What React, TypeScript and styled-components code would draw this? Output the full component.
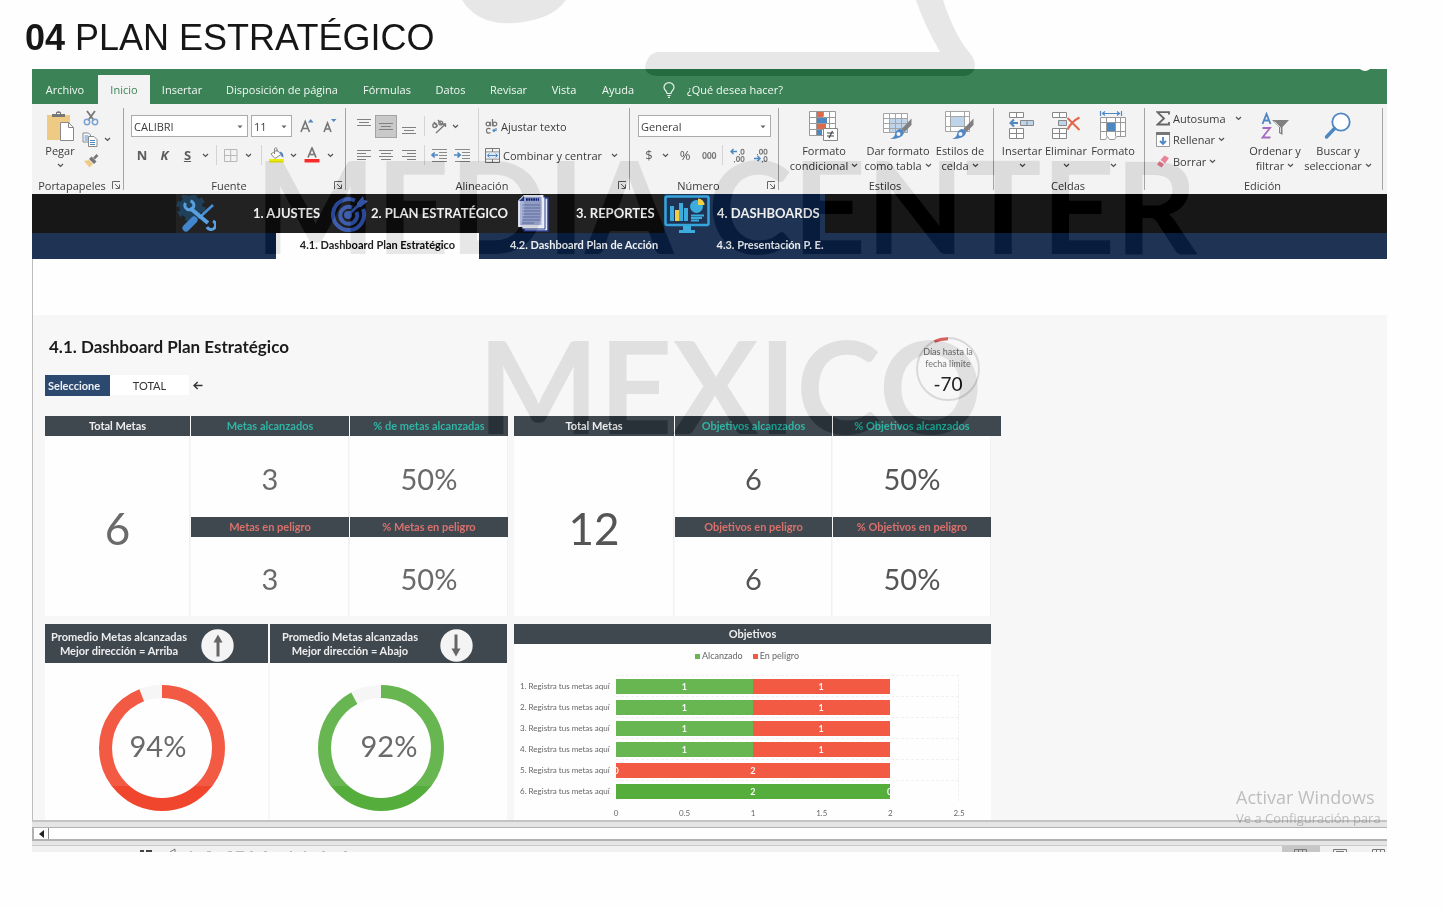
import React from "react";
import styled, { createGlobalStyle, css } from "styled-components";

const ui = `"Open Sans", "Noto Sans", sans-serif`;
const cell = `Lato, "Open Sans", sans-serif`;
const green = "#3c8257";
const slate = "#3f474f";
const GREY = "#767676";
const BLUE = "#4f87c3";

const Global = createGlobalStyle`
  * { box-sizing: border-box; }
  body { margin: 0; background: #fefefe; }
  button, select { font: inherit; color: inherit; border: 0; background: none; padding: 0; margin: 0; border-radius: 0; }
  svg { display: block; flex: none; }
`;

const Page = styled.div`
  position: relative;
  min-width: 1445px;
  min-height: 909px;
  background: #fefefe;
  overflow: hidden;
`;
const Title = styled.h1`
  margin: 0;
  padding: 16px 25px 9px;
  font: 400 36px/44px "Liberation Sans", Arial, sans-serif;
  color: #161616;
`;
const Window = styled.main`
  position: relative;
  margin: 0 58px 0 32px;
`;

/* ---------- ribbon tabs ---------- */
const TabBar = styled.nav`
  position: relative;
  display: flex;
  align-items: flex-end;
  height: 35px;
  background: ${green};
  font: 400 11px/28px ${ui};
  color: #f2f8f4;
  overflow: hidden;
  &::after {
    content: "";
    position: absolute;
    right: 16px;
    top: -8px;
    width: 12px;
    height: 10px;
    border-radius: 50%;
    background: #fefefe;
  }
`;
const Tab = styled.button<{ $w: number; $on?: boolean }>`
  width: ${(p) => p.$w}px;
  height: 29px;
  white-space: nowrap;
  ${(p) => p.$on && css`background: #f3f3f3; color: ${green};`}
`;
const Ask = styled(Tab)`
  display: flex;
  align-items: center;
  gap: 12px;
  padding-left: 15px;
`;

/* ---------- ribbon ---------- */
const Ribbon = styled.section`
  display: flex;
  height: 90px;
  padding: 4px 0 0;
  background: #f3f3f3;
  font: 400 11px/15px ${ui};
  color: #3c3c3c;
`;
const Group = styled.div<{ $w: number }>`
  display: flex;
  flex-direction: column;
  width: ${(p) => p.$w}px;
  height: 82px;
  border-right: 1px solid #a5a5a5;
`;
const GroupBody = styled.div<{ $pad?: number }>`
  display: flex;
  flex: 1;
  padding-left: ${(p) => p.$pad ?? 8}px;
`;
const GroupFoot = styled.div`
  display: flex;
  align-items: center;
  height: 10px;
  padding-right: 2px;
`;
const GroupName = styled.span`
  flex: 1;
  text-align: center;
`;
const Launcher = styled.button`
  width: 9px;
  height: 9px;
`;
const Stack = styled.div<{ $w?: number; $pad?: number }>`
  display: flex;
  flex-direction: column;
  width: ${(p) => (p.$w ? p.$w + "px" : "auto")};
  padding-left: ${(p) => p.$pad ?? 0}px;
`;
const Tools = styled.div<{ $h?: number }>`
  display: flex;
  align-items: center;
  height: ${(p) => p.$h ?? 29}px;
`;
const Tool = styled.button<{ $w: number; $on?: boolean }>`
  display: flex;
  align-items: center;
  justify-content: center;
  width: ${(p) => p.$w}px;
  height: 23px;
  font-size: 13px;
  color: #5c5c5c;
  ${(p) => p.$on && css`background: #c9c9c9; border: 1px solid #a3a3a3;`}
`;
const WideTool = styled.button<{ $far?: boolean }>`
  display: flex;
  align-items: center;
  gap: 3px;
  height: 22px;
  white-space: nowrap;
  ${(p) => p.$far && css`svg:last-child { margin-left: 6px; }`}
`;
const Divider = styled.span<{ $h?: number; $m?: number }>`
  width: 1px;
  height: ${(p) => p.$h ?? 20}px;
  margin: 0 ${(p) => p.$m ?? 4}px;
  background: #d4d4d4;
`;
const Combo = styled.label<{ $w: number }>`
  position: relative;
  display: flex;
  align-items: center;
  width: ${(p) => p.$w}px;
  height: 22px;
  margin-right: 3px;
  background: #fff;
  border: 1px solid #ababab;
  select {
    appearance: none;
    width: 100%;
    height: 20px;
    padding-left: 2px;
    outline: 0;
  }
  svg { position: absolute; right: 4px; top: 9px; }
`;
const Big = styled.button<{ $w: number }>`
  display: flex;
  flex-direction: column;
  align-items: center;
  width: ${(p) => p.$w}px;
  padding-top: 3px;
  white-space: nowrap;
  svg.art { margin-bottom: 2px; }
`;
const Line = styled.span`
  display: flex;
  align-items: center;
  justify-content: center;
  gap: 3px;
  height: 15px;
`;

/* ---------- workbook navigation ---------- */
const NavBar = styled.nav`
  display: flex;
  height: 39px;
  padding-left: 144px;
  background: #171717;
  font: 700 13px/39px ${cell};
  color: #f0f0f0;
`;
const NavItem = styled.a<{ $w: number; $gap: number; $on?: boolean }>`
  display: flex;
  align-items: center;
  gap: ${(p) => p.$gap}px;
  width: ${(p) => p.$w}px;
  color: inherit;
  text-decoration: none;
  white-space: nowrap;
  background: ${(p) => (p.$on ? "#1f3454" : "#222")};
`;
const SubBar = styled.nav`
  display: flex;
  height: 26px;
  padding-left: 244px;
  background: #1f3454;
  font: 700 11px/23px ${cell};
  color: #eef1f5;
`;
const SubItem = styled.a<{ $w: number; $on?: boolean }>`
  width: ${(p) => p.$w}px;
  text-align: center;
  color: inherit;
  text-decoration: none;
  ${(p) => p.$on && css`background: #fefefe; color: #222;`}
`;

/* ---------- sheet ---------- */
const Sheet = styled.section`
  position: relative;
  height: 561px;
  padding-top: 56px;
  border-left: 1px solid #bdbdbd;
  background: #fefefe;
  overflow: hidden;
  font-family: ${cell};
`;
const Canvas = styled.div`
  height: 505px;
  padding: 22px 0 0 12px;
  background: #f7f7f7;
`;
const Head = styled.header`
  display: flex;
  justify-content: space-between;
  width: 935px;
  height: 79px;
`;
const Heading = styled.h2`
  margin: 0 0 18px 4px;
  font: 700 17px/20px ${cell};
  color: #1b1b1b;
`;
const Picker = styled.label`
  display: flex;
  align-items: center;
  height: 20px;
  font-size: 11px;
  line-height: 21px;
  color: #333;
  select {
    appearance: none;
    width: 79px;
    height: 20px;
    margin-right: 4px;
    background: #fff;
    text-align: center;
    text-align-last: center;
    outline: 0;
  }
`;
const PickerName = styled.span`
  width: 65px;
  padding-left: 3px;
  background: #2c4a70;
  color: #eef1f5;
  font-weight: 700;
`;
const Deadline = styled.div`
  position: relative;
  width: 64px;
  height: 64px;
  padding-top: 9px;
  text-align: center;
  white-space: nowrap;
  font-size: 9px;
  line-height: 12px;
  color: #777;
  > svg { position: absolute; left: 0; top: 0; }
  p { position: relative; margin: 0 -4px; }
  strong { position: relative; display: block; font: 400 19px/28px ${cell}; color: #222; }
`;
const Board = styled.div`
  display: grid;
  grid-template-columns: 463px 477px;
  gap: 8px 6px;
`;
const Kpis = styled.div<{ $cols: string }>`
  display: grid;
  grid-template-columns: ${(p) => p.$cols};
  grid-template-rows: 20px 81px 20px 79px;
  column-gap: 1px;
`;
const Bar = styled.div<{ $tone?: string; $over?: boolean }>`
  background: ${slate};
  color: ${(p) => p.$tone ?? "#eee"};
  font: 700 11px/20px ${cell};
  text-align: center;
  ${(p) => p.$over && css`margin-right: -10px; padding-right: 10px;`}
`;
const Value = styled.div<{ $big?: boolean; $dark?: boolean }>`
  display: flex;
  align-items: center;
  justify-content: center;
  padding: 3px 0 0 1px;
  background: #fefefe;
  border-right: 1px solid #f1f1f1;
  font-size: ${(p) => (p.$big ? 44 : 29)}px;
  color: ${(p) => (p.$dark ? "#555" : "#6a6a6a")};
  ${(p) => p.$big && css`grid-row: 2 / 5;`}
`;
const Gauges = styled.div`
  display: grid;
  grid-template-columns: 223px 237px;
  column-gap: 2px;
`;
const Panel = styled.article`
  height: 196px;
  background: #fefefe;
`;
const GaugeHead = styled.header<{ $pad: number; $gap: number }>`
  display: flex;
  align-items: center;
  gap: ${(p) => p.$gap}px;
  height: 39px;
  padding-left: ${(p) => p.$pad}px;
  background: ${slate};
  color: #eee;
  font: 700 11px/14px ${cell};
  text-align: center;
  white-space: nowrap;
  svg { margin-top: 4px; }
`;
const GaugeBody = styled.div<{ $left: number }>`
  padding: 21px 0 0 ${(p) => p.$left}px;
`;
const Chart = styled.div`
  padding: 5px 0 0 6px;
  color: #666;
  font-size: 8px;
`;
const Legend = styled.div`
  display: flex;
  justify-content: center;
  gap: 10px;
  height: 14px;
  margin: 0 17px 12px 0;
  font-size: 9px;
  line-height: 14px;
`;
const Key = styled.span<{ $c: string }>`
  display: flex;
  align-items: center;
  gap: 2px;
  &::before { content: ""; width: 5px; height: 5px; background: ${(p) => p.$c}; }
`;
const Row = styled.div`
  display: flex;
  align-items: center;
  height: 21px;
`;
const RowName = styled.span`
  width: 96px;
  padding-right: 8px;
  text-align: right;
  white-space: nowrap;
`;
const Plot = styled.div`
  display: flex;
  align-items: center;
  width: 343px;
  height: 21px;
  border: 1px dashed #f1f1f1;
  border-width: 1px 1px 0 0;
`;
const Seg = styled.span<{ $c: string }>`
  display: flex;
  justify-content: center;
  height: 15px;
  background: ${(p) => p.$c};
  color: #f7f7f7;
  font: 700 9px/15px ${cell};
`;
const Zero = styled(Seg)`
  position: relative;
  z-index: 1;
  width: 0;
`;
const Axis = styled.div`
  display: flex;
  justify-content: space-between;
  width: 363px;
  margin-left: 86px;
  padding-top: 6px;
  line-height: 12px;
  span { width: 20px; text-align: center; }
`;
const Activate = styled.div`
  position: absolute;
  right: 0;
  bottom: 25px;
  width: 151px;
  z-index: 2;
  color: rgba(120, 120, 120, 0.45);
  font: 400 13px/18px ${ui};
  white-space: nowrap;
  strong { display: block; font: 400 18px/24px ${ui}; }
`;

/* ---------- window bottom ---------- */
const Bottom = styled.footer`
  position: relative;
  border-top: 2px solid #c4c4c4;
  background: #e5e5e5;
  padding-top: 5px;
`;
const ScrollTrack = styled.div`
  display: flex;
  height: 14px;
  border: solid #b2b2b2;
  border-width: 1px 0 2px;
  background: #fefefe;
`;
const ScrollButton = styled.button`
  display: flex;
  align-items: center;
  justify-content: center;
  width: 17px;
  border-left: 2px solid #b2b2b2;
  border-right: 1px solid #8a8a8a;
`;
const StatusBar = styled.div`
  display: flex;
  justify-content: space-between;
  height: 7px;
  margin-top: 4px;
  border-top: 1px solid #cacaca;
  background: #f1f1f1;
  overflow: hidden;
`;

/* ---------- watermark ---------- */
const Mark = styled.div<{ $x: number; $y: number; $gap?: number }>`
  position: absolute;
  left: ${(p) => p.$x}px;
  top: ${(p) => p.$y}px;
  z-index: 3;
  display: flex;
  gap: ${(p) => p.$gap ?? 0}px;
  color: #171717;
  font: 700 128px/96px ${cell};
  mix-blend-mode: difference;
  pointer-events: none;
  white-space: nowrap;
`;

/* ---------- icons ---------- */
const Chev = () => (
  <svg width="7" height="5" viewBox="0 0 7 5"><path d="M1 1l2.5 2.4L6 1" fill="none" stroke="#555" strokeWidth="1.3" /></svg>
);
const Tri = () => (
  <svg width="6" height="4" viewBox="0 0 6 4"><path d="M.5.5h5L3 3.3z" fill="#666" /></svg>
);
const Corner = () => (
  <svg width="9" height="9" viewBox="0 0 9 9"><path d="M.5 8V.5H8M3 3l4 4M7.5 3.5v4h-4" fill="none" stroke="#666" /></svg>
);
const Lines = ({ rows, y = 3 }: { rows: [number, number][]; y?: number }) => (
  <svg width="16" height="17" viewBox="0 0 16 17">
    {rows.map(([a, b], i) => <path key={i} d={`M${a} ${y + i * 3 + 0.5}H${b}`} stroke="#808080" />)}
  </svg>
);
const Indent = ({ right }: { right?: boolean }) => (
  <svg width="17" height="15" viewBox="0 0 17 15">
    <path d="M1 1.5h15M8 4.5h8M8 7.5h8M8 10.5h8M1 13.5h15" stroke="#8a8a8a" />
    <path d={right ? "M0 7h6M3.5 4.5L6.2 7 3.5 9.5" : "M7 7H1M3.7 4.5L1 7l2.7 2.5"} fill="none" stroke={BLUE} strokeWidth="1.7" />
  </svg>
);
const Grow = ({ down }: { down?: boolean }) => (
  <svg width="15" height="16" viewBox="0 0 15 16">
    <path d={down ? "M1 14L4.5 5 8 14M2.3 11h4.5" : "M1 14L5.2 3.5 9.500 14M2.500 10.500h5.500"} fill="none" stroke={GREY} strokeWidth="1.6" />
    <path d={down ? "M8 1h5.500L10.700 4z" : "M8 4.500h5.500L10.700 1z"} fill={BLUE} />
  </svg>
);
const Clipboard = () => (
  <svg className="art" width="28" height="30" viewBox="0 0 28 30">
    <path d="M1 4h23v25H1z" fill="#efca85" />
    <path d="M6 6V3h4V1.200q2.500-2 5 0V3h4v3z" fill="#777" />
    <path d="M11 2.500h3" stroke="#f3f3f3" />
    <path d="M14.500 11.500h8l5 5v13h-13z" fill="#fff" stroke="#888" /><path d="M22.500 11.500v5h5" fill="none" stroke="#888" />
  </svg>
);
const Scissors = () => (
  <svg width="16" height="16" viewBox="0 0 16 16">
    <path d="M4 1l7 9.500M12 1L5 10.500" stroke="#777" strokeWidth="1.800" />
    <circle cx="4" cy="12" r="2.700" fill="none" stroke="#7ba3d2" strokeWidth="1.500" /><circle cx="12" cy="12" r="2.700" fill="none" stroke="#7ba3d2" strokeWidth="1.500" />
  </svg>
);
const Copy = () => (
  <svg width="16" height="15" viewBox="0 0 16 15">
    <path d="M1 1h5.500l2 2v7H1z" fill="#fff" stroke="#888" /><path d="M2.500 4h4M2.500 6h4M2.500 8h4" stroke={BLUE} />
    <path d="M6.500 4.500h5.500l3 3v7H6.500z" fill="#fff" stroke="#888" /><path d="M8 8.500h5M8 10.500h5M8 12.500h5" stroke={BLUE} />
  </svg>
);
const Brush = () => (
  <svg width="16" height="14" viewBox="0 0 16 14">
    <path d="M1 7l5-1 4 4-3.500 3.500z" fill="#efca85" /><path d="M6 5l2.500-2.500 5 5L11 10z" fill="#777" /><path d="M11 4.500L14.500 1" stroke="#777" strokeWidth="2.500" />
  </svg>
);
const Borders = () => (
  <svg width="14" height="13" viewBox="0 0 14 13"><path d="M.5.500h12.500v12H.500zM6.700.500v12M.500 6.500H13" fill="none" stroke="#b8b8b8" /></svg>
);
const Bucket = () => (
  <svg width="17" height="16" viewBox="0 0 17 16">
    <path d="M3 7l6-4 4 4.500-6 4z" fill="#fff" stroke="#888" /><path d="M6.500 7V1.500q1.500-1.500 2.500 0V5" fill="none" stroke="#888" />
    <path d="M11.500 4.500q4 0 4 6l-2-1z" fill={BLUE} /><path d="M1 12h15v3.500H1z" fill="#eceb0c" />
  </svg>
);
const FontColor = () => (
  <svg width="16" height="16" viewBox="0 0 16 16">
    <path d="M4 10.500L8 1l4 9.500M5.300 7.500h5.400" fill="none" stroke={GREY} strokeWidth="1.700" /><path d="M.500 12h15v3.500H.500z" fill="#fb2a2a" />
  </svg>
);
const Orient = () => (
  <svg width="16" height="15" viewBox="0 0 16 15">
    <g fill="none" stroke={GREY} strokeWidth="1.300"><circle cx="3.800" cy="6.500" r="2" /><path d="M3 3l3.500 4.500M7 1l4 5" /><circle cx="9.700" cy="4" r="1.900" /><path d="M5 14L14.500 5M11.500 5h3v3" /></g>
  </svg>
);
const Wrap = () => (
  <svg width="13" height="15" viewBox="0 0 13 15">
    <g fill="none" stroke={GREY} strokeWidth="1.300"><circle cx="3" cy="5" r="1.900" /><path d="M5.300 2.800v4.500M7.500 0v7.200" /><circle cx="9.800" cy="5" r="1.900" /><path d="M5.500 9.800q-4-1.500-4 1.900t4 1.900" /></g>
    <path d="M11 9v2.500H8M9.500 10L8 11.500 9.500 13" fill="none" stroke={BLUE} strokeWidth="1.200" />
  </svg>
);
const Merge = () => (
  <svg width="15" height="15" viewBox="0 0 15 15">
    <path d="M.500.500h14v14H.500zM.500 4h14M.500 11h14M7.500.500V4M7.500 11v3.500" fill="none" stroke="#777" /><path d="M1 4.500h13v6H1z" fill="#dce8f5" />
    <path d="M2.500 7.500h10M4.500 5.500l-2 2 2 2M10.500 5.500l2 2-2 2" fill="none" stroke={BLUE} />
  </svg>
);
const Decimals = ({ less }: { less?: boolean }) => (
  <svg width="16" height="15" viewBox="0 0 16 15">
    <g fill="none" stroke={GREY} strokeWidth="1.100">
      {less ? <><ellipse cx="8" cy="3.700" rx="1.500" ry="2.500" /><ellipse cx="12.500" cy="3.700" rx="1.500" ry="2.500" /><ellipse cx="12.500" cy="11" rx="1.500" ry="2.500" /><path d="M4.500 6v1.200M9.500 13v1.500" /></>
        : <><ellipse cx="12.500" cy="3.700" rx="1.500" ry="2.500" /><ellipse cx="8" cy="11" rx="1.500" ry="2.500" /><ellipse cx="12.500" cy="11" rx="1.500" ry="2.500" /><path d="M9.500 6v1.200M4.500 13v1.500" /></>}
    </g>
    <path d={less ? "M1 10.500h6M4.500 8l2.500 2.500L4.500 13" : "M7 3.500H1M3.500 1L1 3.500 3.500 6"} fill="none" stroke={BLUE} strokeWidth="1.500" />
  </svg>
);
const Thousands = () => (
  <svg width="15" height="9" viewBox="0 0 15 9">
    <g fill="none" stroke={GREY} strokeWidth="1.200"><ellipse cx="2.500" cy="4.500" rx="1.600" ry="3" /><ellipse cx="7.300" cy="4.500" rx="1.600" ry="3" /><ellipse cx="12" cy="4.500" rx="1.600" ry="3" /></g>
  </svg>
);
const Conditional = () => (
  <svg className="art" width="30" height="30" viewBox="0 0 30 30">
    <path d="M1 1h26v23H1z" fill="#fff" /><path d="M8 1h6v5H8zM8 12h9v6H8z" fill="#dd6a4b" /><path d="M8 7h10v5H8zM8 18h5v6H8z" fill={BLUE} />
    <path d="M.5.500h26v24H.500zM7.500.500v24M14.500.500v5M20.500.500v24M.500 6.500h26M.500 12.500h26M.500 18.500h14" fill="none" stroke="#999" />
    <path d="M14.500 17.500h14v12h-14z" fill="#fff" stroke="#888" /><path d="M18 22h7M18 25h7M23.500 20l-3.500 7" stroke="#444" strokeWidth="1.200" />
  </svg>
);
const PaintBrush = () => (
  <><path d="M28.500 7.500v6.500L21.500 21l-3-3z" fill="#808080" /><path d="M16.500 18q4 0 4.500 4-2 6-14 6 5-2 5-5 1-4 4.500-5z" fill={BLUE} /><circle cx="15.500" cy="23" r="2" fill="#f3f3f3" /></>
);
const TableStyle = () => (
  <svg className="art" width="30" height="30" viewBox="0 0 30 30">
    <path d="M1 3h23v19H1z" fill="#fff" /><path d="M7 8h17v14H7z" fill="#bdd4eb" />
    <path d="M.500 2.500h24v19H.500zM6.500 2.500v19M12.500 2.500v19M18.500 2.500v19M.500 7.500h24M.500 12.500h24M.500 17.500h24" fill="none" stroke="#a5a5a5" /><PaintBrush />
  </svg>
);
const CellStyle = () => (
  <svg className="art" width="30" height="30" viewBox="0 0 30 30">
    <path d="M1 1h24v20H1z" fill="#fff" /><path d="M6 6h13v10H6z" fill="#bdd4eb" />
    <path d="M.500.500h24v20H.500zM5.500.500v20M19.500.500v20M.500 5.500h24M.500 15.500h24" fill="none" stroke="#a5a5a5" /><PaintBrush />
  </svg>
);
const InsertCells = () => (
  <svg className="art" width="26" height="30" viewBox="0 0 26 30">
    <path d="M.500 1.500h14v5H.500zM7.500 1.500v5M.500 17.500h14v10H.500zM7.500 17.500v10M.500 22.500h14" fill="#fff" stroke="#888" />
    <path d="M11.500 9.500h13v5h-13zM18 9.500v5" fill="#bdd4eb" stroke="#888" /><path d="M9 12H2M5 8.500L1.500 12 5 15.500" fill="none" stroke={BLUE} strokeWidth="2" />
  </svg>
);
const DeleteCells = () => (
  <svg className="art" width="29" height="30" viewBox="0 0 29 30">
    <path d="M.500 1.500h14v5H.500zM7.500 1.500v5M.500 17.500h14v10H.500zM7.500 17.500v10M.500 22.500h14" fill="#fff" stroke="#888" />
    <path d="M6.500 9.500h8v5h-8z" fill="#bdd4eb" stroke="#888" /><path d="M15.500 7l12 12M27.500 6.500q-8 4-12 12" fill="none" stroke="#e2674a" strokeWidth="2" />
  </svg>
);
const FormatCells = () => (
  <svg className="art" width="28" height="30" viewBox="0 0 28 30">
    <path d="M1.500 0v5M22.500 0v5M3 2.500h18M6 .500l-2.500 2L6 4.500M18 .500l2.500 2-2.500 2" fill="none" stroke={BLUE} strokeWidth="1.200" />
    <path d="M1.500 6.500h25v19h-9l-2 3h-5l-2-3-2 3h-5z" fill="#fff" stroke="#999" /><path d="M7.500 6.500v19M16.500 6.500v19M21.500 6.500v19M1.500 11.500h25M1.500 20.500h25" stroke="#999" /><path d="M8 12h8v8H8z" fill={BLUE} />
  </svg>
);
const Sigma = () => (
  <svg width="14" height="15" viewBox="0 0 14 15"><path d="M13 3.500V1.200H1.500L8 7.500l-6.500 6H13v-2.500" fill="none" stroke="#666" strokeWidth="1.800" /></svg>
);
const Fill = () => (
  <svg width="14" height="15" viewBox="0 0 14 15"><path d="M.500.500h13v14H.500z" fill="#fff" stroke="#999" /><path d="M0 0h14v3H0z" fill="#777" /><path d="M7 5v7M4 9l3 3 3-3" fill="none" stroke={BLUE} strokeWidth="1.800" /></svg>
);
const Eraser = () => (
  <svg width="14" height="13" viewBox="0 0 14 13"><path d="M8.500.500L13 3 9 8.500 4.500 5z" fill="#e88496" /><path d="M3.500 6l4.500 3.500L5.500 12.500 1 9.500z" fill="#e88496" /></svg>
);
const SortIcon = () => (
  <svg className="art" width="28" height="30" viewBox="0 0 28 30">
    <path d="M1.500 13L5.500 3l4 10M3 9.500h5" fill="none" stroke={BLUE} strokeWidth="1.800" /><path d="M1.500 17H9L1.500 26.500h8" fill="none" stroke="#a66ac2" strokeWidth="1.800" />
    <path d="M11 9h17l-6.500 7v8l-3.500-2v-6z" fill="#808080" /><path d="M13.500 10.500l6 6v5" fill="none" stroke="#ddd" />
  </svg>
);
const FindIcon = () => (
  <svg className="art" width="28" height="30" viewBox="0 0 28 30"><circle cx="17" cy="11" r="8.700" fill="#fff" stroke={BLUE} strokeWidth="1.800" /><path d="M10.500 17.500L2.500 26" stroke={BLUE} strokeWidth="3.500" strokeLinecap="round" /></svg>
);
const Bulb = () => (
  <svg width="12" height="16" viewBox="0 0 12 16"><path d="M4 11.500q0-1.500-1.500-3Q1 7 1 5.300a5 4.600 0 0 1 10 0Q11 7 9.500 8.500 8 10 8 11.500zM4.300 13.500h3.400M5 15.300h2" fill="none" stroke="#e5f0e8" strokeWidth="1.200" /></svg>
);
const ToolsArt = () => (
  <svg width="40" height="38" viewBox="0 0 40 38">
    <circle cx="15" cy="12" r="12.500" fill="none" stroke="#1f4058" strokeWidth="4" strokeDasharray="5.600 4.200" /><circle cx="15" cy="12" r="11.500" fill="#1f4058" />
    <path d="M37 10L23 23" stroke="#4a90d9" strokeWidth="2.500" /><path d="M10 33l8-8" stroke="#4285cd" strokeWidth="7" strokeLinecap="round" />
    <path d="M14 13l18 15" stroke="#5aa0e0" strokeWidth="4" />
    <path d="M10.500 8a4.500 4.500 0 1 0 5-2M38 26a4.500 4.500 0 1 1-6 6" fill="none" stroke="#5aa0e0" strokeWidth="3" transform="translate(-1 0)" />
  </svg>
);
const TargetArt = () => (
  <svg width="38" height="38" viewBox="0 0 38 38">
    <g fill="none" stroke="#3f5fae" strokeWidth="4"><path d="M24 5.500A15.500 15.500 0 1 0 32 14" /><path d="M21 12.500A8.500 8.500 0 1 0 25.500 17" /></g>
    <circle cx="17" cy="20" r="4" fill="#3f5fae" /><path d="M17 20L30 8" stroke="#3f5fae" strokeWidth="3" /><path d="M26 8l6-7 1 4 4 1-7 6-4 .5z" fill="#4868ba" />
  </svg>
);
const ReportArt = () => (
  <svg width="33" height="38" viewBox="0 0 33 38">
    <path d="M7 3h24v33H7z" fill="#e4e8f4" stroke="#2b3f8f" strokeWidth="1.500" /><path d="M5 2h23v32H5z" fill="#f0f2f8" stroke="#2b3f8f" />
    <path d="M7 1h18.500v30H2V6z" fill="#aab4d8" stroke="#e9ecf6" strokeWidth="1.800" /><path d="M2 6l5-5v5z" fill="#223a8c" /><path d="M9 4.500h13" stroke="#223a8c" strokeWidth="2.500" strokeDasharray="1.800 .6" />
    <path d="M5 10h18M5 13h18M5 16h18M5 19h18M5 22h18M5 25h18M5 28h12" stroke="#7382ba" />
  </svg>
);
const MonitorArt = () => (
  <svg width="46" height="38" viewBox="0 0 46 38">
    <rect x="1.500" y="1.500" width="43" height="28.500" rx="1.500" fill="#1f3454" stroke="#35a5dc" strokeWidth="2.500" />
    <path d="M6 11h4v15H6zM15 8h4v18h-4zM20 13h4v13h-4z" fill="#3cacdf" /><path d="M11 15h4v11h-4z" fill="#f0cf45" />
    <circle cx="32.500" cy="11.500" r="6.500" fill="#3cacdf" /><path d="M34 10V3.500a6.500 6.500 0 0 1 6.500 6.500z" fill="#f0cf45" />
    <path d="M27 20.500h13M27 23h11M27 25.500h8" stroke="#3cacdf" strokeWidth="1.800" /><path d="M19 31h8v4h4v3H15v-3h4z" fill="#3cacdf" />
  </svg>
);
const Arrow = ({ down }: { down?: boolean }) => (
  <svg width="33" height="33" viewBox="0 0 33 33">
    <circle cx="16.500" cy="16.500" r="16.200" fill="#f4f4f4" />
    <path d="M15.500 27.500V13.500h-3L17 5.500l4.500 8h-3v14z" fill="#666" transform={down ? "rotate(180 16.500 16.500)" : undefined} />
  </svg>
);
const Donut = ({ pct, top, bottom, id, shift }: { pct: number; top: string; bottom: string; id: string; shift: number }) => {
  const c = 2 * Math.PI * 56.5;
  return (
    <svg width="128" height="128" viewBox="0 0 128 128" role="img" aria-label={`${pct}%`}>
      <defs>
        <linearGradient id={id} gradientUnits="userSpaceOnUse" x1="0" y1="0" x2="0" y2="128">
          <stop offset=".797" stopColor={top} /><stop offset=".797" stopColor={bottom} />
        </linearGradient>
        <mask id={id + "m"}>
          <circle cx="64" cy="64" r="56.5" fill="none" stroke="#fff" strokeWidth="13" strokeDasharray={`${(c * pct) / 100} ${c}`} transform="rotate(-90 64 64)" />
        </mask>
      </defs>
      <circle cx="64" cy="64" r="56.5" fill="none" stroke="#f6f6f6" strokeWidth="13" />
      <rect width="128" height="128" fill={`url(#${id})`} mask={`url(#${id}m)`} />
      <text x={64 + shift} y="73" textAnchor="middle" fontFamily="Lato, sans-serif" fontSize="29" fill="#6a6a6a">{pct}%</text>
    </svg>
  );
};

const teal = "#2fb5a4";
const coral = "#d9716c";
const G = "#68b651";
const R = "#f35a44";
const rows: [number, number][] = [[1, 1], [1, 1], [1, 1], [1, 1], [0, 2], [2, 0]];

const KpiBlock = ({ cols, total, heads, values, dark, over }: { cols: string; total: string; heads: string[]; values: string[]; dark?: boolean; over?: boolean }) => (
  <Kpis $cols={cols}>
    <Bar>Total Metas</Bar><Bar $tone={teal}>{heads[0]}</Bar><Bar $tone={teal} $over={over}>{heads[1]}</Bar>
    <Value $big $dark={dark}>{total}</Value><Value $dark={dark}>{values[0]}</Value><Value $dark={dark}>{values[1]}</Value>
    <Bar $tone={coral}>{heads[2]}</Bar><Bar $tone={coral}>{heads[3]}</Bar>
    <Value $dark={dark}>{values[2]}</Value><Value $dark={dark}>{values[3]}</Value>
  </Kpis>
);
const Part = ({ n, color }: { n: number; color: string }) =>
  n > 0 ? <Seg $c={color} style={{ width: `${n * 40}%` }}>{n}</Seg> : <Zero $c={color}>0</Zero>;
const BigTool = ({ w, icon, a, b }: { w: number; icon: React.ReactNode; a: string; b?: string }) => (
  <Big $w={w}>{icon}<Line>{a}</Line><Line>{b}<Chev /></Line></Big>
);
const Foot = ({ name, launch }: { name: string; launch?: boolean }) => (
  <GroupFoot><GroupName>{name}</GroupName>{launch && <Launcher aria-label={name}><Corner /></Launcher>}</GroupFoot>
);

export default function App() {
  return (
    <Page>
      <Global />
      <Title><b>04</b> PLAN ESTRATÉGICO</Title>
      <Window>
        <TabBar>
          <Tab $w={66}>Archivo</Tab><Tab $w={52} $on>Inicio</Tab><Tab $w={64}>Insertar</Tab><Tab $w={136}>Disposición de página</Tab>
          <Tab $w={74}>Fórmulas</Tab><Tab $w={53}>Datos</Tab><Tab $w={63}>Revisar</Tab><Tab $w={48}>Vista</Tab><Tab $w={60}>Ayuda</Tab>
          <Ask $w={160}><Bulb />¿Qué desea hacer?</Ask>
        </TabBar>
        <Ribbon>
          <Group $w={92}>
            <GroupBody $pad={12}>
              <BigTool w={32} icon={<Clipboard />} a="Pegar" />
              <Stack $w={40}>
                <Tools $h={20}><Tool $w={30} aria-label="Cortar"><Scissors /></Tool></Tools>
                <Tools $h={22}><Tool $w={28} aria-label="Copiar"><Copy /></Tool><Chev /></Tools>
                <Tools $h={22}><Tool $w={30} aria-label="Copiar formato"><Brush /></Tool></Tools>
              </Stack>
            </GroupBody>
            <Foot name="Portapapeles" launch />
          </Group>
          <Group $w={222}>
            <GroupBody $pad={7}>
              <Stack>
                <Tools $h={36}>
                  <Combo $w={117}><select aria-label="Fuente"><option>CALIBRI</option></select><Tri /></Combo>
                  <Combo $w={41}><select aria-label="Tamaño"><option>11</option></select><Tri /></Combo>
                  <Tool $w={24} aria-label="Aumentar"><Grow /></Tool><Tool $w={22} aria-label="Disminuir"><Grow down /></Tool>
                </Tools>
                <Tools $h={22}>
                  <Tool $w={22}><b>N</b></Tool><Tool $w={23}><b><i>K</i></b></Tool><Tool $w={23}><b><u>S</u></b></Tool><Tool $w={12} aria-label="Más"><Chev /></Tool>
                  <Divider $m={5} /><Tool $w={18} aria-label="Bordes"><Borders /></Tool><Tool $w={17} aria-label="Más"><Chev /></Tool>
                  <Divider $m={4} /><Tool $w={21} aria-label="Relleno"><Bucket /></Tool><Tool $w={13} aria-label="Más"><Chev /></Tool>
                  <Tool $w={24} aria-label="Color"><FontColor /></Tool><Tool $w={12} aria-label="Más"><Chev /></Tool>
                </Tools>
              </Stack>
            </GroupBody>
            <Foot name="Fuente" launch />
          </Group>
          <Group $w={284}>
            <GroupBody $pad={7}>
              <Stack $w={125}>
                <Tools $h={36}>
                  <Tool $w={22} aria-label="Arriba"><Lines y={1} rows={[[1, 15], [3, 13], [1, 15]]} /></Tool>
                  <Tool $w={22} $on aria-label="Medio"><Lines y={5} rows={[[1, 15], [3, 13], [1, 15]]} /></Tool>
                  <Tool $w={24} aria-label="Abajo"><Lines y={9} rows={[[1, 15], [3, 13], [1, 15]]} /></Tool>
                  <Divider $m={3} /><Tool $w={22} aria-label="Orientación"><Orient /></Tool><Tool $w={10} aria-label="Más"><Chev /></Tool>
                </Tools>
                <Tools $h={22}>
                  <Tool $w={22} aria-label="Izquierda"><Lines rows={[[1, 15], [1, 10], [1, 15], [1, 10]]} /></Tool>
                  <Tool $w={22} aria-label="Centro"><Lines rows={[[1, 15], [3, 13], [1, 15], [3, 13]]} /></Tool>
                  <Tool $w={24} aria-label="Derecha"><Lines rows={[[1, 15], [6, 15], [1, 15], [6, 15]]} /></Tool>
                  <Divider $m={3} /><Tool $w={23} aria-label="Reducir"><Indent /></Tool><Tool $w={23} aria-label="Aumentar"><Indent right /></Tool>
                </Tools>
              </Stack>
              <Divider $h={54} $m={0} />
              <Stack $pad={6}>
                <Tools $h={36}><WideTool><Wrap />Ajustar texto</WideTool></Tools>
                <Tools $h={22}><WideTool $far><Merge />Combinar y centrar<Chev /></WideTool></Tools>
              </Stack>
            </GroupBody>
            <Foot name="Alineación" launch />
          </Group>
          <Group $w={149}>
            <GroupBody>
              <Stack>
                <Tools $h={36}><Combo $w={133}><select aria-label="Formato de número"><option>General</option></select><Tri /></Combo></Tools>
                <Tools $h={22}>
                  <Tool $w={22}>$</Tool><Tool $w={10} aria-label="Más"><Chev /></Tool><Tool $w={30}>%</Tool>
                  <Tool $w={18} aria-label="Millares"><Thousands /></Tool>
                  <Divider $m={4} /><Tool $w={22} aria-label="Más decimales"><Decimals /></Tool><Tool $w={23} aria-label="Menos decimales"><Decimals less /></Tool>
                </Tools>
              </Stack>
            </GroupBody>
            <Foot name="Número" launch />
          </Group>
          <Group $w={215}>
            <GroupBody $pad={6}>
              <BigTool w={78} icon={<Conditional />} a="Formato" b="condicional" />
              <BigTool w={70} icon={<TableStyle />} a="Dar formato" b="como tabla" />
              <BigTool w={54} icon={<CellStyle />} a="Estilos de" b="celda" />
            </GroupBody>
            <Foot name="Estilos" />
          </Group>
          <Group $w={151}>
            <GroupBody $pad={6}>
              <BigTool w={44} icon={<InsertCells />} a="Insertar" />
              <BigTool w={44} icon={<DeleteCells />} a="Eliminar" />
              <BigTool w={50} icon={<FormatCells />} a="Formato" />
            </GroupBody>
            <Foot name="Celdas" />
          </Group>
          <Group $w={238}>
            <GroupBody $pad={11}>
              <Stack $w={87}>
                <Tools $h={20}><WideTool $far><Sigma />Autosuma<Chev /></WideTool></Tools>
                <Tools $h={23}><WideTool><Fill />Rellenar<Chev /></WideTool></Tools>
                <Tools $h={21}><WideTool><Eraser />Borrar<Chev /></WideTool></Tools>
              </Stack>
              <BigTool w={64} icon={<SortIcon />} a="Ordenar y" b="filtrar" />
              <BigTool w={62} icon={<FindIcon />} a="Buscar y" b="seleccionar" />
            </GroupBody>
            <Foot name="Edición" />
          </Group>
        </Ribbon>

        <NavBar>
          <NavItem href="#ajustes" $w={155} $gap={37}><ToolsArt />1. AJUSTES</NavItem>
          <NavItem href="#plan" $w={186} $gap={2}><TargetArt />2. PLAN ESTRATÉGICO</NavItem>
          <NavItem href="#reportes" $w={147} $gap={26}><ReportArt />3. REPORTES</NavItem>
          <NavItem href="#dashboards" $w={161} $gap={7} $on><MonitorArt />4. DASHBOARDS</NavItem>
        </NavBar>
        <SubBar>
          <SubItem href="#d41" $w={203} $on>4.1. Dashboard Plan Estratégico</SubItem>
          <SubItem href="#d42" $w={210}>4.2. Dashboard Plan de Acción</SubItem>
          <SubItem href="#d43" $w={162}>4.3. Presentación P. E.</SubItem>
        </SubBar>

        <Sheet>
          <Canvas>
            <Head>
              <div>
                <Heading>4.1. Dashboard Plan Estratégico</Heading>
                <Picker>
                  <PickerName>Seleccione</PickerName>
                  <select><option>TOTAL</option></select>
                  <svg width="10" height="9" viewBox="0 0 10 9"><path d="M9.500 4.500H1M4.700 1L1 4.500 4.700 8" fill="none" stroke="#333" strokeWidth="1.400" /></svg>
                </Picker>
              </div>
              <Deadline>
                <svg width="64" height="64" viewBox="0 0 64 64"><circle cx="32" cy="32" r="31" fill="none" stroke="#d9d9d9" strokeWidth="2" /><path d="M18.500 4.500Q24 2 32 1.800" fill="none" stroke="#d9605c" strokeWidth="3" /></svg>
                <p>Días hasta la<br />fecha límite</p>
                <strong>-70</strong>
              </Deadline>
            </Head>
            <Board>
              <KpiBlock cols="145px 158px 158px" total="6" heads={["Metas alcanzados", "% de metas alcanzadas", "Metas en peligro", "% Metas en peligro"]} values={["3", "50%", "3", "50%"]} />
              <KpiBlock cols="160px 157px 158px" total="12" dark over heads={["Objetivos alcanzados", "% Objetivos alcanzados", "Objetivos en peligro", "% Objetivos en peligro"]} values={["6", "50%", "6", "50%"]} />
              <Gauges>
                <Panel>
                  <GaugeHead $pad={6} $gap={14}><span>Promedio Metas alcanzadas<br />Mejor dirección = Arriba</span><Arrow /></GaugeHead>
                  <GaugeBody $left={53}><Donut id="up" pct={94} top={R} bottom="#f1462e" shift={-4} /></GaugeBody>
                </Panel>
                <Panel>
                  <GaugeHead $pad={12} $gap={22}><span>Promedio Metas alcanzadas<br />Mejor dirección = Abajo</span><Arrow down /></GaugeHead>
                  <GaugeBody $left={47}><Donut id="down" pct={92} top={G} bottom="#55ae3c" shift={8} /></GaugeBody>
                </Panel>
              </Gauges>
              <Panel>
                <Bar>Objetivos</Bar>
                <Chart>
                  <Legend><Key $c={G}>Alcanzado</Key><Key $c={R}>En peligro</Key></Legend>
                  {rows.map(([a, b], i) => (
                    <Row key={i}>
                      <RowName>{i + 1}. Registra tus metas aquí</RowName>
                      <Plot>
                        <Part n={a} color={i === 5 ? "#55ae3c" : G} />
                        <Part n={b} color={R} />
                      </Plot>
                    </Row>
                  ))}
                  <Axis>{["0", "0.5", "1", "1.5", "2", "2.5"].map((t) => <span key={t}>{t}</span>)}</Axis>
                </Chart>
              </Panel>
            </Board>
          </Canvas>
        </Sheet>

        <Bottom>
          <Activate><strong>Activar Windows</strong>Ve a Configuración para</Activate>
          <ScrollTrack><ScrollButton aria-label="Desplazar a la izquierda"><svg width="5" height="8" viewBox="0 0 5 8"><path d="M5 0v8L0 4z" fill="#222" /></svg></ScrollButton></ScrollTrack>
          <StatusBar>
            <svg width="330" height="6" viewBox="0 0 330 6">
              <path d="M108 4h4v2h-4zM114 4h6v2h-6z" fill="#444" /><path d="M138 6l5-3v3" fill="none" stroke="#777" />
              <path d="M158 5.500h2M175 5.500h4M196 5.500h4M204 5.500h8M218 5.500h3M232 5.500h3M258 5.500h2M272 5.500h2M290 5.500h3M312 5.500h3" stroke="#bbb" />
            </svg>
            <svg width="105" height="6" viewBox="0 0 105 6">
              <path d="M0 0h38v6H0z" fill="#c6c6c6" /><path d="M12.500 6V3.500h12V6M16.500 3v3M20.500 3v3M51.500 6V3.500h13V6M54 5.500h8M90.500 6V3.500h12V6M94.500 3v3M98.500 3v3" fill="none" stroke="#777" />
            </svg>
          </StatusBar>
        </Bottom>
      </Window>

      <Mark $x={255} $y={157} $gap={34}><span>MEDIA</span><span>CENTER</span></Mark>
      <Mark $x={478} $y={337}>MEXICO</Mark>
      <Mark $x={460} $y={0}>
        <svg width="520" height="78" viewBox="0 0 520 78">
          <path d="M2 0Q18 26 55 23Q92 20 106 0zM456 0Q463 22 480 52H196Q186 56 185 68Q187 76 198 76H505Q516 74 515 64Q514 58 509 52Q495 36 483 0z" fill="#171717" />
        </svg>
      </Mark>
    </Page>
  );
}
